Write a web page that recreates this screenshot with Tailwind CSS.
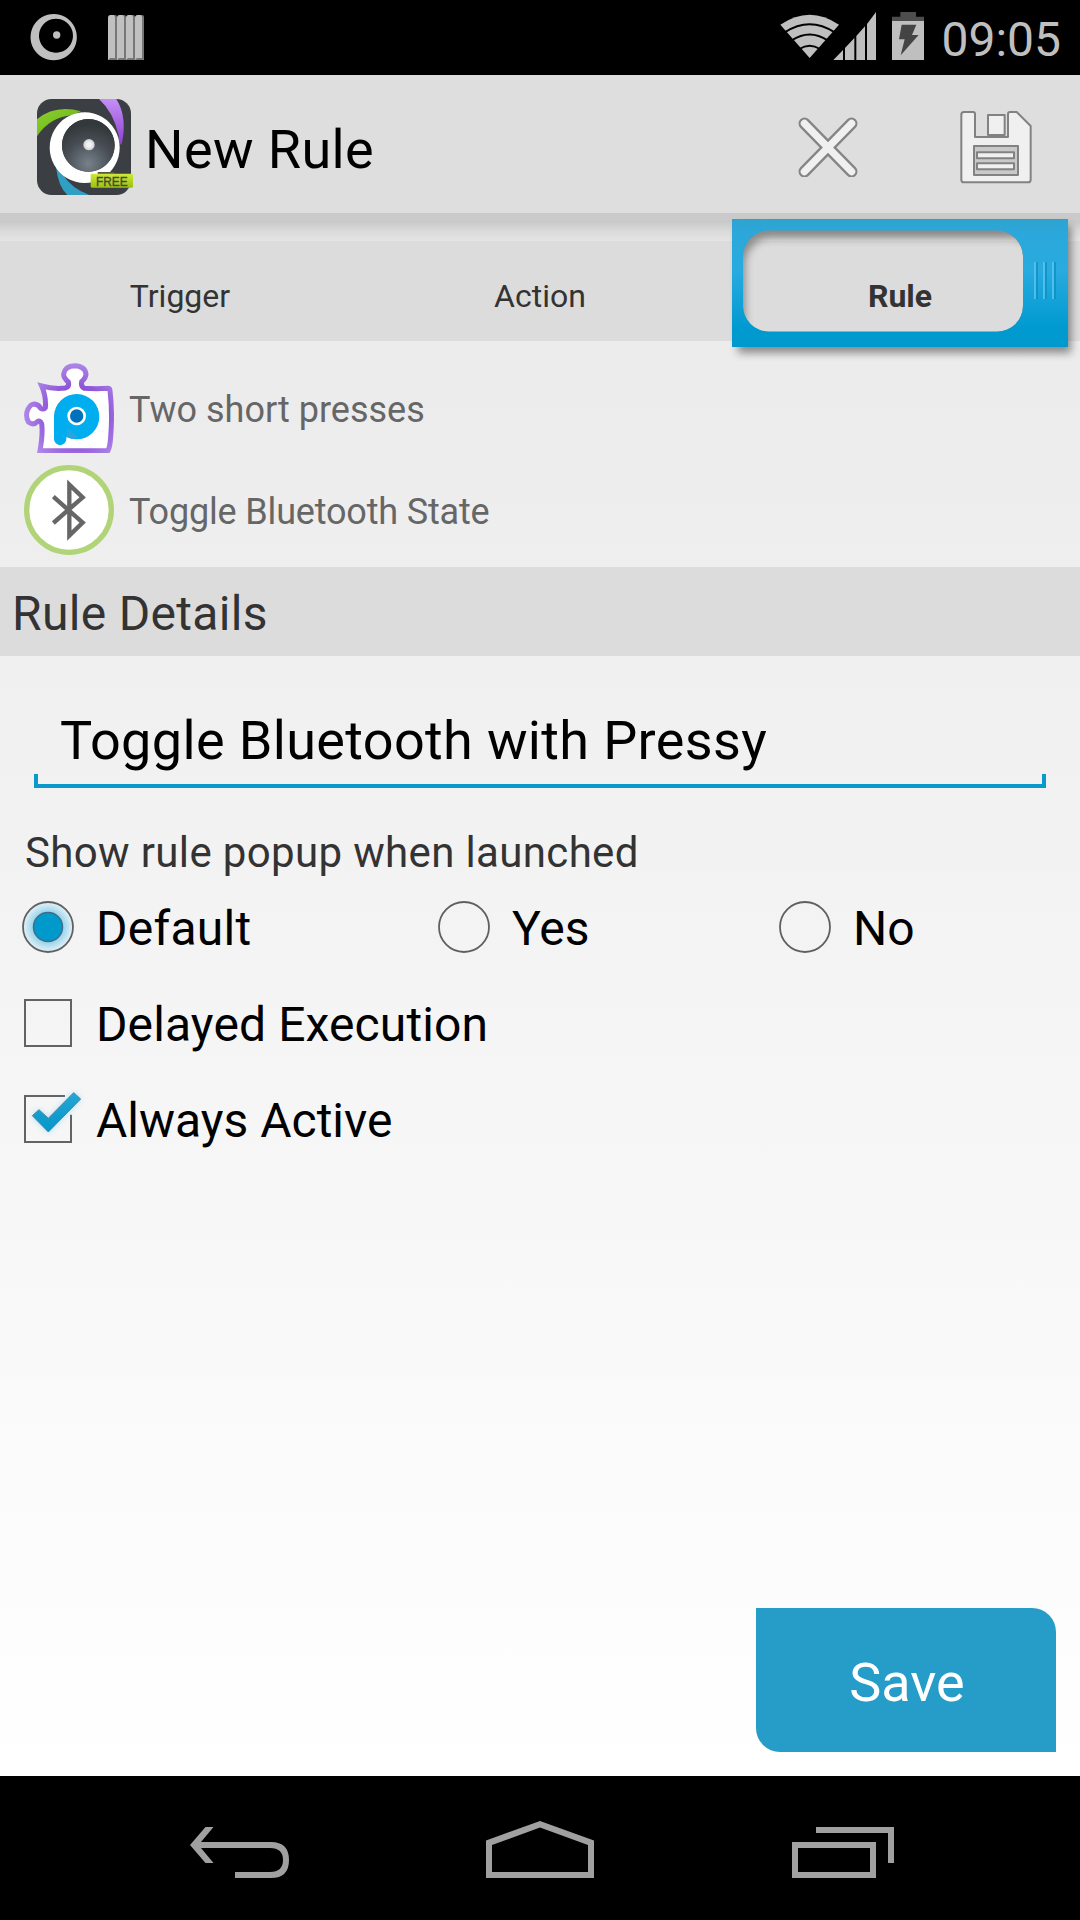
<!DOCTYPE html>
<html lang="en">
<head>
<meta charset="utf-8">
<title>New Rule</title>
<script src="https://cdn.jsdelivr.net/npm/@tailwindcss/browser@4"></script>
</head>
<body class="bg-black">
<div class="relative flex h-[1920px] w-[1080px] flex-col overflow-hidden bg-black font-[Roboto,sans-serif] text-black">

  <!-- Status bar -->
  <div class="flex h-[75px] shrink-0 items-start">
    <svg class="ml-[30px] mt-[13px] h-[48px] w-[48px]" viewBox="90 39 144 144"><path fill="#bfbfbf" fill-rule="evenodd" d="M161 42a69.500 69.500 0 1 0 .1 0zM168 56a51 51 0 1 1-.1 0z"/><circle cx="170" cy="105" r="11" fill="#bfbfbf"/></svg>
    <svg class="ml-[30px] mt-[15px] h-[46px] w-[36px]" viewBox="0 0 36 46">
      <g fill="#777"><path d="M2 0h5q2 0 2 2v43H0V2zM11 0h5q2 0 2 2v43H9V2zM20 0h5q2 0 2 2v43h-9V2zM29 0h5q2 0 2 2v43h-9V2z"/></g>
      <g fill="#c0c0c0"><path d="M0 3q0-3 3-3h2q2 0 2 3v40H2l-2 2zM9 3q0-3 3-3h2q2 0 2 3v40h-5l-2 2zM18 3q0-3 3-3h2q2 0 2 3v40h-5l-2 2zM27 3q0-3 3-3h2q2 0 2 3v40h-5l-2 2z"/></g>
    </svg>
    <div class="ml-auto mr-[19px] flex items-start">
      <svg class="mt-[12px] h-[48px] w-[60px]" viewBox="60 36 180 144">
        <path fill="#bfbfbf" d="M149 174L61 74Q149 14 237 74z"/>
        <g fill="none" stroke="#000" stroke-width="6"><path d="M74 97Q149 48 224 97"/><path d="M95 121Q149 86 203 121"/><path d="M118 147Q149 127 180 147"/></g>
      </svg>
      <svg class="ml-[-7px] mt-[12px] h-[48px] w-[44px]" viewBox="219 36 132 144"><path fill="#bfbfbf" d="M220 180L249 150V180zM255 144L283 114V180H255zM289 108L315 79V180H289zM321 72L348 36V180H321z"/></svg>
      <svg class="ml-[15px] mt-[12px] h-[48px] w-[32px]" viewBox="396 36 96 144"><path fill="#4d4d4d" d="M421 36h47v14h24v14h-96V50h25z"/><path fill="#bfbfbf" d="M396 63h96v117h-96z"/><path fill="#444" d="M425 74h44l-13 31h20l-54 61 12-48h-17z"/></svg>
      <div class="ml-[17px] mt-[8px] text-[48px] leading-[64px] text-[#bfbfbf]">09:05</div>
    </div>
  </div>

  <!-- Window content -->
  <div class="flex h-[1701px] shrink-0 flex-col bg-linear-to-b from-[#e8e8e8] to-white">

    <!-- Action bar -->
    <div class="flex h-[138px] shrink-0 items-start bg-[#dedede]">
      <svg class="ml-[37px] mt-[24px] h-[96px] w-[96px]" viewBox="111 296 288 288">
        <defs>
          <clipPath id="tile"><rect x="111" y="296" width="282" height="288" rx="44"/></clipPath>
          <radialGradient id="lens" cx=".5" cy=".85" r=".75"><stop offset="0" stop-color="#77818a"/><stop offset=".6" stop-color="#464c52"/><stop offset="1" stop-color="#33383c"/></radialGradient>
          <linearGradient id="purple" x1="0" y1="0" x2="0" y2="1"><stop offset="0" stop-color="#c590f5"/><stop offset="1" stop-color="#8c3fd0"/></linearGradient>
          <linearGradient id="lime" x1="0" y1="0" x2="1" y2="1"><stop offset="0" stop-color="#8ed02f"/><stop offset="1" stop-color="#5fae10"/></linearGradient>
          <linearGradient id="tag" x1="0" y1="0" x2="0" y2="1"><stop offset="0" stop-color="#cfe83a"/><stop offset="1" stop-color="#9cc010"/></linearGradient>
          <radialGradient id="dot"><stop offset=".4" stop-color="#f2f2f2"/><stop offset="1" stop-color="#c9cdd0"/></radialGradient>
        </defs>
        <g clip-path="url(#tile)">
          <rect x="111" y="296" width="288" height="288" fill="#3b3f43"/>
          <path fill="url(#lime)" d="M111 357Q165 312 243 333L215 345Q150 350 111 408z"/>
          <path fill="url(#purple)" d="M297 296h52Q384 352 364 435Q355 425 356 405Q340 335 297 296z"/>
          <path fill="#2f9fc4" d="M168 500Q175 560 202 584h66Q215 565 190 525z"/>
        </g>
        <path fill="#fff" fill-rule="evenodd" d="M254 336a105 106 0 1 0 .1 0zM265 356a79 79 0 1 1-.1 0z"/>
        <circle cx="265" cy="435" r="79" fill="url(#lens)"/>
        <circle cx="267" cy="433" r="17" fill="url(#dot)"/>
        <path fill="#555a3c" d="M293 515h50v6h-50z"/>
        <rect x="272" y="520" width="127" height="42" rx="4" fill="url(#tag)"/>
        <text x="288" y="556" font-family="Liberation Sans" font-size="37" textLength="95" lengthAdjust="spacingAndGlyphs" fill="#3f4a30" stroke="#3f4a30" stroke-width="1">FREE</text>
      </svg>
      <div class="ml-[12px] mt-[43px] text-[54px] leading-[64px] tracking-[0.4px]">New Rule</div>
      <svg class="ml-auto mt-[42px] h-[60px] w-[60px]" viewBox="798 116 60 60"><g fill="none" stroke-linecap="round"><path stroke="#858585" stroke-width="12" d="M804.500 122.500l47 48M851.500 122.500l-47 48"/><path stroke="#f0f0f0" stroke-width="7.500" d="M804.500 122.500l47 48M851.500 122.500l-47 48"/></g></svg>
      <svg class="ml-[102px] mr-[48px] mt-[36px] h-[73px] w-[72px]" viewBox="600 333 216 219">
        <g stroke="#828282" stroke-width="6" stroke-linejoin="round">
          <path fill="#f0f0f0" d="M612 336h27q6 0 6 6v69h99v-69q0-6 6-6h20l42 42v161q0 8-8 8H612q-8 0-8-8V344q0-8 8-8z"/>
          <rect x="684" y="345" width="50" height="60" fill="#f0f0f0"/>
          <rect x="642" y="438" width="132" height="87" fill="#c9c9c9"/>
          <rect x="651" y="457" width="111" height="18" fill="#f0f0f0"/>
          <rect x="651" y="490" width="111" height="18" fill="#f0f0f0"/>
        </g>
      </svg>
    </div>
    <div class="h-[8px] shrink-0 bg-[#cacaca]"></div>
    <div class="h-[20px] shrink-0 bg-linear-to-b from-[#c8c8c8] via-[#dadada] to-[#e4e4e4]"></div>

    <!-- Tabs -->
    <div class="relative grid h-[100px] shrink-0 grid-cols-3 bg-[#dcdcdc] pt-[9px] text-center text-[32px] leading-[92px] text-[#333]">
      <div>Trigger</div>
      <div>Action</div>
      <div class="relative z-10 font-bold">Rule</div>
      <svg class="absolute left-[720px] top-[-28px] h-[150px] w-[360px]" viewBox="720 213 360 150">
        <defs>
          <linearGradient id="blue" x1="0" y1="0" x2="0" y2="1"><stop offset="0" stop-color="#2fa3d0"/><stop offset=".12" stop-color="#2ba8db"/><stop offset=".4" stop-color="#28abe0"/><stop offset=".85" stop-color="#009ad0"/><stop offset="1" stop-color="#0099cc"/></linearGradient>
          <filter id="soft" x="-10%" y="-20%" width="120%" height="150%"><feGaussianBlur stdDeviation="4"/></filter>
          <clipPath id="hole"><rect x="743" y="231" width="280" height="101" rx="26"/></clipPath>
          <clipPath id="outside"><path clip-rule="evenodd" d="M720 213h360v150H720zM769 231h228a26 26 0 0 1 26 26v49a26 26 0 0 1-26 26H769a26 26 0 0 1-26-26v-49a26 26 0 0 1 26-26z"/></clipPath>
        </defs>
        <g clip-path="url(#outside)"><path d="M738 226h333v127H738z" fill="#000" opacity=".42" filter="url(#soft)"/></g>
        <g clip-path="url(#hole)"><path filter="url(#soft)" fill="#000" fill-rule="evenodd" opacity=".38" d="M720 200h340v180H720zM771 238h240a26 26 0 0 1 26 26v70a26 26 0 0 1-26 26H771a26 26 0 0 1-26-26v-70a26 26 0 0 1 26-26z"/></g>
        <path fill="url(#blue)" fill-rule="evenodd" d="M732 219h336v128H732zM769 230.500h228a26 26 0 0 1 26 26v49a26 26 0 0 1-26 26H769a26 26 0 0 1-26-26v-49a26 26 0 0 1 26-26z"/>
        <g stroke-width="1.500"><path stroke="#5cc6f0" d="M1035 262v37M1044 262v37M1053 262v37"/><path stroke="#0d8fc2" d="M1037 262v37M1046 262v37M1055 262v37"/></g>
      </svg>
    </div>

    <!-- Rule summary -->
    <div class="flex h-[226px] shrink-0 flex-col gap-[12px] pl-[24px] pt-[22px] text-[36px] leading-[87px] text-[#666]">
      <div class="flex h-[90px] gap-[15px]">
        <svg class="h-[90px] w-[90px]" viewBox="72 68 270 270">
          <defs><radialGradient id="edge" gradientUnits="userSpaceOnUse" cx="230" cy="225" r="160"><stop offset=".5" stop-color="#8a50d8"/><stop offset="1" stop-color="#b08ae8"/></radialGradient></defs>
          <path fill="#fff" stroke="url(#edge)" stroke-width="15" d="M125 137Q160 147 196 143Q209 138 205 125Q190 112 191 101Q194 77 224 76Q255 77 258 101Q258 112 245 124Q242 138 253 144Q290 146 324 144Q329 144 330 150Q338 220 332 290Q330 320 324 331H120Q129 280 125 250Q121 238 112 244Q100 256 86 246Q75 228 83 208Q92 190 104 191Q116 193 121 203Q130 210 136 202Q139 170 125 137z"/>
          <path fill="#00adef" d="M162 227a68 68 0 1 1 68 70q-18 0-31-7v6a18 18 0 0 1-37 0z"/>
          <path fill="#28a5e0" d="M202 262l30 26-8 9-24-7z"/>
          <circle cx="230" cy="227" r="24" fill="#0071bc" stroke="#fff" stroke-width="8"/>
        </svg>
        <div class="pt-[4px]">Two short presses</div>
      </div>
      <div class="flex h-[90px] gap-[15px]">
        <svg class="h-[90px] w-[90px]" viewBox="72 375 270 270">
          <circle cx="207" cy="510" r="127" fill="#fff" stroke="#b2d479" stroke-width="16"/>
          <path fill="none" stroke="#666" stroke-width="13" d="M160 470L248 548L208 587V434L248 472L160 549"/>
        </svg>
        <div class="pt-[4px] tracking-[-0.17px]">Toggle Bluetooth State</div>
      </div>
    </div>

    <div class="h-[89px] shrink-0 bg-[#dcdcdc] pl-[12px] pt-[4px] text-[48px] leading-[85px] tracking-[0.33px] text-[#333]">Rule Details</div>

    <!-- Rule name field -->
    <div class="ml-[34px] mt-[53px] w-[1012px] shrink-0">
      <div class="h-[65px] pl-[26px] text-[54px] leading-[64px] tracking-[0.35px]">Toggle Bluetooth with Pressy</div>
      <div class="h-[14px] border-x-4 border-b-4 border-[#0a9aca]"></div>
    </div>

    <div class="ml-[25px] mt-[40px] h-[51px] shrink-0 text-[42px] leading-[50px] tracking-[0.35px] text-[#333]">Show rule popup when launched</div>

    <!-- Options -->
    <div class="flex h-[96px] shrink-0 text-[48px] leading-[99px]">
      <div class="flex w-[416px] items-center gap-[20px] pl-[22px]">
        <svg class="h-[54px] w-[54px]" viewBox="0 0 54 54">
          <defs><radialGradient id="glow"><stop offset=".55" stop-color="#8fd0ea"/><stop offset="1" stop-color="#e6f2f7"/></radialGradient></defs>
          <circle cx="26" cy="27" r="25" fill="url(#glow)" stroke="#5f6163" stroke-width="1.800"/><circle cx="26" cy="27" r="14.500" fill="#0099cc" stroke="#3f6f85" stroke-width="1.500"/>
        </svg>
        <span class="pt-[2px] tracking-[0.25px]">Default</span>
      </div>
      <div class="flex w-[341px] items-center gap-[20px] pl-[22px]">
        <svg class="h-[54px] w-[54px]" viewBox="0 0 54 54"><circle cx="26" cy="27" r="25" fill="none" stroke="#5f5f5f" stroke-width="1.800"/></svg>
        <span class="pt-[2px]">Yes</span>
      </div>
      <div class="flex items-center gap-[20px] pl-[22px]">
        <svg class="h-[54px] w-[54px]" viewBox="0 0 54 54"><circle cx="26" cy="27" r="25" fill="none" stroke="#5f5f5f" stroke-width="1.800"/></svg>
        <span class="pt-[2px]">No</span>
      </div>
    </div>
    <div class="flex h-[96px] shrink-0 items-center gap-[24px] pl-[24px] text-[48px] leading-[99px]">
      <div class="h-[48px] w-[48px] border-2 border-[#636363]"></div>
      <span class="pt-[2px] tracking-[0.12px]">Delayed Execution</span>
    </div>
    <div class="flex h-[96px] shrink-0 items-center gap-[24px] pl-[24px] text-[48px] leading-[99px]">
      <svg class="h-[48px] w-[48px] overflow-visible" viewBox="72 405 144 144">
        <defs><filter id="halo" x="-40%" y="-40%" width="180%" height="180%"><feGaussianBlur stdDeviation="9"/></filter><linearGradient id="tick" x1="0" y1="0" x2="0" y2="1"><stop offset="0" stop-color="#22a6d6"/><stop offset="1" stop-color="#0795c8"/></linearGradient></defs>
        <path fill="none" stroke="#636363" stroke-width="6" d="M195 408H75V546H213V464"/>
        <path fill="#7fd0f0" opacity=".6" filter="url(#halo)" d="M96 467L117 448L145 474L221 397L243 417L145 518z"/>
        <path fill="url(#tick)" stroke="#4d86a3" stroke-width="3" d="M97 467L117 449L145 475L221 398L242 417L145 516z"/>
      </svg>
      <span class="pt-[2px]">Always Active</span>
    </div>

    <!-- Save -->
    <div class="mb-[24px] mr-[24px] mt-auto h-[144px] w-[300px] self-end rounded-bl-[24px] rounded-tr-[24px] bg-[#259dc8] pl-[2px] pt-[5px] text-center text-[54px] leading-[139px] text-white">Save</div>
  </div>

  <!-- Navigation bar -->
  <div class="flex h-[144px] shrink-0 items-start">
    <svg class="ml-[189px] mt-[45px] h-[63px] w-[102px]" viewBox="189 1821 102 63"><path fill="#a0a0a0" d="M205.500 1827h8l-12.500 15h70q18 0 18 18t-18 18H235v-6h35q13 0 13-12t-13-12H201l12.500 15h-8L190 1845z"/></svg>
    <svg class="ml-[195px] mt-[45px] h-[57px] w-[108px]" viewBox="486 1821 108 57"><path fill="#a0a0a0" fill-rule="evenodd" d="M540 1821l54 19.500V1878H486V1840.500zM540 1827.500L492 1845V1872H588V1845z"/></svg>
    <svg class="ml-[198px] mt-[51px] h-[51px] w-[102px]" viewBox="792 1827 102 51"><path fill="#a0a0a0" fill-rule="evenodd" d="M816 1827h78v36h-6v-30h-72zM792 1842h84v36h-84zM798 1848v24h72v-24z"/></svg>
  </div>
</div>
</body>
</html>
